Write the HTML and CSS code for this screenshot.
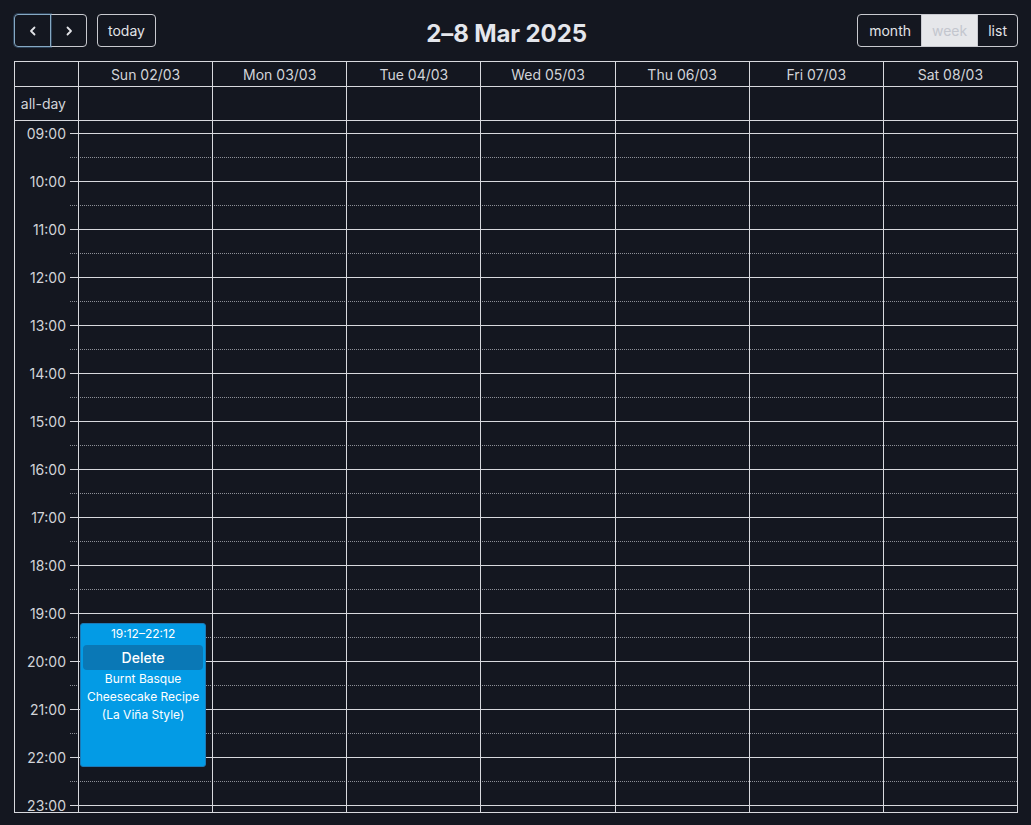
FILE: index.html
```html
<!DOCTYPE html>
<html lang="en">
<head>
<meta charset="utf-8">
<title>Calendar</title>
<link rel="stylesheet" href="styles.css">
</head>
<body>
<div class="calendar">
  <div class="toolbar">
    <div class="chunk">
      <div class="btn-group">
        <button class="btn btn-icon focused" aria-label="prev">
          <svg width="10" height="10" viewBox="0 0 10 10"><path d="M6.5 1.5 3 5l3.5 3.5" fill="none" stroke="currentColor" stroke-width="1.8" stroke-linecap="round" stroke-linejoin="round"/></svg>
        </button>
        <button class="btn btn-icon" aria-label="next">
          <svg width="10" height="10" viewBox="0 0 10 10"><path d="M3.5 1.5 7 5l-3.5 3.5" fill="none" stroke="currentColor" stroke-width="1.8" stroke-linecap="round" stroke-linejoin="round"/></svg>
        </button>
      </div>
      <button class="btn btn-today">today</button>
    </div>
    <h2 class="title">2–8 Mar 2025</h2>
    <div class="chunk">
      <div class="btn-group">
        <button class="btn btn-month">month</button>
        <button class="btn active">week</button>
        <button class="btn">list</button>
      </div>
    </div>
  </div>

  <div class="grid">
    <div class="head-row">
      <div class="axis-cell"></div>
      <div class="day-head">Sun 02/03</div>
      <div class="day-head">Mon 03/03</div>
      <div class="day-head">Tue 04/03</div>
      <div class="day-head">Wed 05/03</div>
      <div class="day-head">Thu 06/03</div>
      <div class="day-head">Fri 07/03</div>
      <div class="day-head">Sat 08/03</div>
    </div>
    <div class="allday-row">
      <div class="axis-cell allday-label">all-day</div>
      <div class="day-cell"></div>
      <div class="day-cell"></div>
      <div class="day-cell"></div>
      <div class="day-cell"></div>
      <div class="day-cell"></div>
      <div class="day-cell"></div>
      <div class="day-cell"></div>
    </div>
    <div class="body">
      <div class="slots">
        <div class="slot-spacer"></div>
        <div class="slot hour"><div class="slot-label"><span>09:00</span></div><div class="slot-lane"></div></div>
        <div class="slot half"><div class="slot-label"></div><div class="slot-lane"></div></div>
        <div class="slot hour"><div class="slot-label"><span>10:00</span></div><div class="slot-lane"></div></div>
        <div class="slot half"><div class="slot-label"></div><div class="slot-lane"></div></div>
        <div class="slot hour"><div class="slot-label"><span>11:00</span></div><div class="slot-lane"></div></div>
        <div class="slot half"><div class="slot-label"></div><div class="slot-lane"></div></div>
        <div class="slot hour"><div class="slot-label"><span>12:00</span></div><div class="slot-lane"></div></div>
        <div class="slot half"><div class="slot-label"></div><div class="slot-lane"></div></div>
        <div class="slot hour"><div class="slot-label"><span>13:00</span></div><div class="slot-lane"></div></div>
        <div class="slot half"><div class="slot-label"></div><div class="slot-lane"></div></div>
        <div class="slot hour"><div class="slot-label"><span>14:00</span></div><div class="slot-lane"></div></div>
        <div class="slot half"><div class="slot-label"></div><div class="slot-lane"></div></div>
        <div class="slot hour"><div class="slot-label"><span>15:00</span></div><div class="slot-lane"></div></div>
        <div class="slot half"><div class="slot-label"></div><div class="slot-lane"></div></div>
        <div class="slot hour"><div class="slot-label"><span>16:00</span></div><div class="slot-lane"></div></div>
        <div class="slot half"><div class="slot-label"></div><div class="slot-lane"></div></div>
        <div class="slot hour"><div class="slot-label"><span>17:00</span></div><div class="slot-lane"></div></div>
        <div class="slot half"><div class="slot-label"></div><div class="slot-lane"></div></div>
        <div class="slot hour"><div class="slot-label"><span>18:00</span></div><div class="slot-lane"></div></div>
        <div class="slot half"><div class="slot-label"></div><div class="slot-lane"></div></div>
        <div class="slot hour"><div class="slot-label"><span>19:00</span></div><div class="slot-lane"></div></div>
        <div class="slot half"><div class="slot-label"></div><div class="slot-lane"></div></div>
        <div class="slot hour"><div class="slot-label"><span>20:00</span></div><div class="slot-lane"></div></div>
        <div class="slot half"><div class="slot-label"></div><div class="slot-lane"></div></div>
        <div class="slot hour"><div class="slot-label"><span>21:00</span></div><div class="slot-lane"></div></div>
        <div class="slot half"><div class="slot-label"></div><div class="slot-lane"></div></div>
        <div class="slot hour"><div class="slot-label"><span>22:00</span></div><div class="slot-lane"></div></div>
        <div class="slot half"><div class="slot-label"></div><div class="slot-lane"></div></div>
        <div class="slot hour"><div class="slot-label"><span>23:00</span></div><div class="slot-lane"></div></div>
        <div class="slot half"><div class="slot-label"></div><div class="slot-lane"></div></div>
      </div>
      <div class="cols">
        <div class="col">
          <div class="event" style="top: 501.6px; height: 144px;">
            <div class="ev-time">19:12–22:12</div>
            <button class="ev-delete">Delete</button>
            <div class="ev-title">Burnt Basque<br>Cheesecake Recipe<br>(La Viña Style)</div>
          </div>
        </div>
        <div class="col"></div>
        <div class="col"></div>
        <div class="col"></div>
        <div class="col"></div>
        <div class="col"></div>
        <div class="col"></div>
      </div>
    </div>
  </div>
</div>
</body>
</html>
```

FILE: styles.css
```css
* { box-sizing: border-box; }

html, body {
  margin: 0;
  padding: 0;
  background: #141720;
}

body {
  font-family: Inter, "Noto Sans", "Liberation Sans", sans-serif;
  font-size: 14px;
  color: #d4d6db;
}

.calendar {
  width: 1004px;
  margin: 14px 0 0 14px;
}

/* toolbar */
.toolbar {
  display: flex;
  justify-content: space-between;
  align-items: center;
  height: 33px;
  margin-bottom: 14px;
}

.chunk {
  display: flex;
  align-items: center;
}

.title {
  margin: 0;
  font-size: 24px;
  font-weight: 700;
  color: #e4e6ec;
  letter-spacing: -0.1px;
  padding-top: 5px;
}

.btn-group {
  display: flex;
}

.btn {
  font-family: inherit;
  font-size: 14px;
  color: #e2e3e7;
  background: transparent;
  border: 1px solid #c9cad0;
  border-radius: 4px;
  height: 33px;
  padding: 0 10px;
  line-height: 1;
  cursor: pointer;
  display: flex;
  align-items: center;
  justify-content: center;
}

.btn-group .btn {
  border-radius: 0;
}
.btn-group .btn:first-child {
  border-radius: 4px 0 0 4px;
}
.btn-group .btn:last-child {
  border-radius: 0 4px 4px 0;
}
.btn-group .btn + .btn {
  margin-left: -1px;
}

.btn-icon {
  width: 37px;
  padding: 0;
}

.btn-month {
  padding: 0 10px 0 11px;
}

.btn.focused {
  border-color: #86a9c4;
  box-shadow: 0 0 0 1px rgba(90, 140, 190, 0.35);
  position: relative;
  z-index: 1;
}

.btn-today {
  margin-left: 10px;
  width: 59px;
  padding: 0;
}

.btn.active {
  background: #e6e7ea;
  color: #c3c6ce;
  border-color: #c9cad0;
}

/* grid */
.grid {
  border: 1px solid #d8d9de;
}

.head-row,
.allday-row {
  display: grid;
  grid-template-columns: 63px repeat(7, 1fr);
}

.head-row {
  height: 25px;
  border-bottom: 1px solid #d8d9de;
}

.day-head {
  border-left: 1px solid #d8d9de;
  display: flex;
  align-items: center;
  justify-content: center;
  color: #d2d4d9;
}

.allday-row {
  height: 34px;
  border-bottom: 1px solid #d8d9de;
}

.day-cell {
  border-left: 1px solid #d8d9de;
}

.allday-label {
  display: flex;
  align-items: center;
  justify-content: flex-end;
  padding-right: 12px;
  color: #d2d4d9;
}

.body {
  position: relative;
  height: 691px;
  overflow: hidden;
}

.slots {
  display: flex;
  flex-direction: column;
}

.slot-spacer {
  height: 12px;
  flex-shrink: 0;
}

.slot {
  display: flex;
  height: 24px;
  flex-shrink: 0;
}

.slot-label {
  width: 55px;
  height: 0;
  display: flex;
  align-items: center;
  justify-content: flex-end;
  padding-right: 4px;
  color: #d2d4d9;
  white-space: nowrap;
}

.slot-lane {
  flex: 1;
}

.slot.hour .slot-lane {
  border-top: 1px solid #d8d9de;
}

.slot.half .slot-lane {
  border-top: 1px dotted #8e9098;
}

.cols {
  position: absolute;
  top: 0;
  bottom: 0;
  left: 63px;
  right: 0;
  display: grid;
  grid-template-columns: repeat(7, 1fr);
}

.col {
  position: relative;
  border-left: 1px solid #d8d9de;
}

/* event */
.event {
  position: absolute;
  left: 1px;
  right: 6px;
  background: #039be5;
  border: 1px solid #1b79b6;
  border-radius: 3px;
  padding: 2px 2px;
  color: #ffffff;
  text-align: center;
  font-size: 12px;
  display: flex;
  flex-direction: column;
}

.ev-time {
  line-height: 16px;
  font-size: 12px;
}

.ev-delete {
  margin-top: 3px;
  height: 25px;
  border: none;
  border-radius: 4px;
  background: #0a78b6;
  color: #ffffff;
  font-family: inherit;
  font-size: 14px;
  font-weight: 500;
  cursor: pointer;
}

.ev-title {
  line-height: 18px;
  font-size: 12px;
  white-space: nowrap;
}
```
